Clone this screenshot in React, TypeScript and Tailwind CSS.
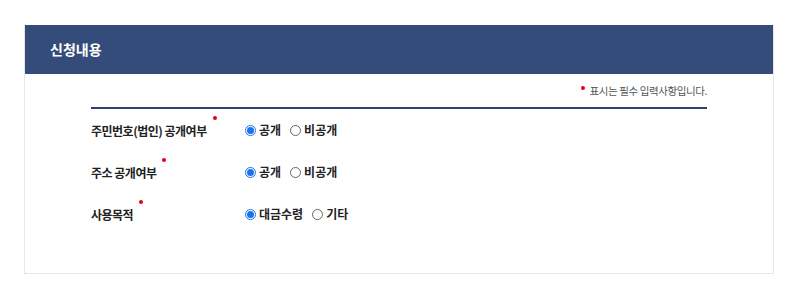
const font = { fontFamily: '"Noto Sans CJK KR", "Noto Sans", sans-serif' };

const Radio = ({ label, checked }: { label: string; checked?: boolean }) => (
  <label className="flex items-center gap-[3px] mr-[9px]">
    {checked ? (
      <span className="w-[11px] h-[11px] rounded-full border border-[#1a73e8] flex items-center justify-center">
        <span className="w-[7px] h-[7px] rounded-full bg-[#1a73e8]" />
      </span>
    ) : (
      <span className="w-[11px] h-[11px] rounded-full border border-[#666] bg-white" />
    )}
    <span className="text-[12px] font-bold text-[#222]">{label}</span>
  </label>
);

const Row = ({ label, options }: { label: string; options: string[] }) => (
  <div className="flex items-center h-[42px]">
    <div className="w-[154px] text-[12px] font-bold text-[#222] flex items-start">
      <span className="mt-[2px] tracking-[-0.5px]">{label}</span>
      <span className="w-[4px] h-[4px] rounded-full bg-[#e60012] ml-[6px] -mt-[4px]" />
    </div>
    <div className="flex items-center">
      {options.map((o, i) => (
        <Radio key={o} label={o} checked={i === 0} />
      ))}
    </div>
  </div>
);

const App = () => {
  return (
    <div className="w-[800px] h-[297px] bg-white pt-[25px] px-[24px]" style={font}>
      <div className="w-[750px] border border-[#e6e6e6] border-t-0">
        <div className="h-[49px] bg-[#344c79] flex items-center pl-[25px]">
          <span className="text-white font-bold text-[14px]">신청내용</span>
        </div>
        <div className="px-[66px] pt-[8px] pb-[38px]">
          <div className="flex justify-end items-center h-[18px]">
            <span className="w-[4px] h-[4px] rounded-full bg-[#e60012] mr-[4px] -mt-[7px]" />
            <span className="text-[10.5px] tracking-[-0.4px] text-[#555]">표시는 필수 입력사항입니다.</span>
          </div>
          <div className="mt-[7px] h-[2px] bg-[#2d446f]" />
          <Row label="주민번호(법인) 공개여부" options={["공개", "비공개"]} />
          <Row label="주소 공개여부" options={["공개", "비공개"]} />
          <Row label="사용목적" options={["대금수령", "기타"]} />
        </div>
      </div>
    </div>
  );
};

export default App;
